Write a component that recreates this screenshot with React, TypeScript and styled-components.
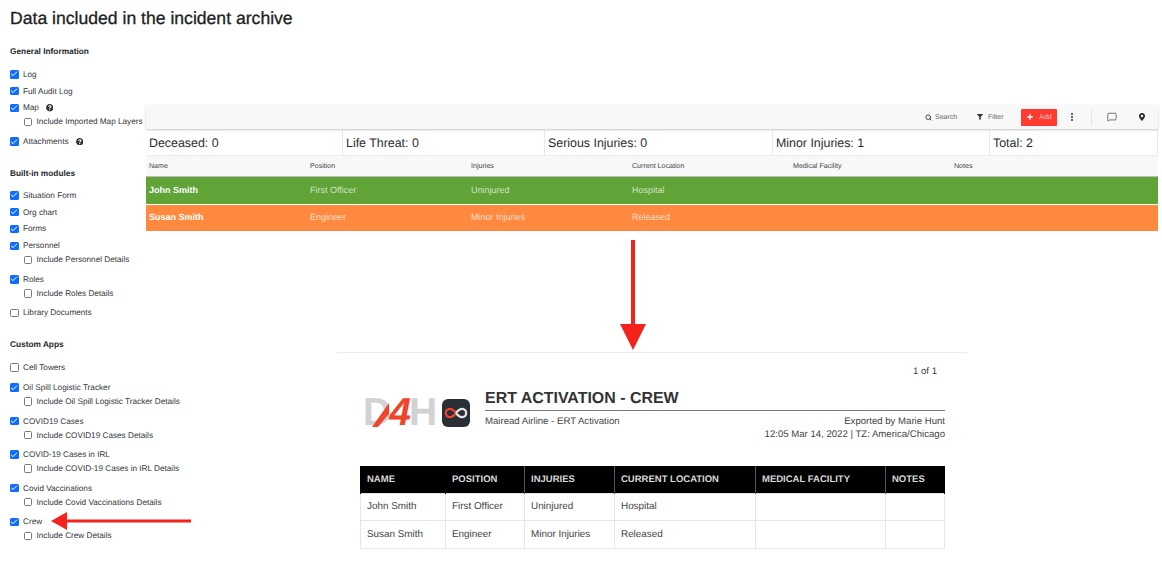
import React from "react";
import styled, { createGlobalStyle } from "styled-components";
import { Check, Search, Plus, MessageSquare } from "lucide-react";
import { FaFilter, FaMapMarkerAlt, FaQuestionCircle } from "react-icons/fa";

const GlobalStyle = createGlobalStyle`
  html, body {
    margin: 0;
    padding: 0;
    background: #fff;
    font-family: "Liberation Sans", Arial, sans-serif;
    text-rendering: geometricPrecision;
    overflow: hidden;
  }
`;

const Page = styled.div`
  position: relative;
  width: 1162px;
  height: 564px;
  overflow: hidden;
`;

const Title = styled.h1`
  margin: 0;
  padding: 8px 0 0 10px;
  height: 36px;
  box-sizing: border-box;
  font-size: 17.6px;
  line-height: 20px;
  font-weight: 400;
  color: #1c1e22;
  -webkit-text-stroke: 0.3px #1c1e22;
`;

const Body = styled.div`
  display: flex;
`;

// left column with the checkbox tree
const Sidebar = styled.aside`
  width: 146px;
  flex: none;
  padding-left: 10px;
  box-sizing: border-box;
  white-space: nowrap;
`;

const SectionTitle = styled.h3<{ $gap: number }>`
  margin: 0 0 ${(p) => p.$gap}px;
  padding-top: 9px;
  font-size: 8.3px;
  line-height: 12px;
  font-weight: 700;
  color: #24272b;
`;

const Section = styled.section`
  margin-bottom: 8px;
`;

const Field = styled.div`
  display: flex;
  align-items: center;
  height: 16.8px;
  font-size: 8.2px;
  color: #33373c;
`;

const SubField = styled(Field)`
  height: 11.2px;
  padding-left: 13.5px;
  margin-bottom: 5.6px;
`;

const TowerField = styled(Field)`
  margin-bottom: 3px;
`;

const Box = styled.span<{ $checked?: boolean }>`
  width: 8.5px;
  height: 8.5px;
  flex: none;
  margin-right: 4.5px;
  box-sizing: border-box;
  border-radius: 1.5px;
  display: flex;
  align-items: center;
  justify-content: center;
  background: ${(p) => (p.$checked ? "#0d6efd" : "#fff")};
  border: ${(p) => (p.$checked ? "none" : "0.8px solid #77797c")};
  color: #fff;
`;

const Hint = styled(FaQuestionCircle)`
  margin-left: 7px;
  width: 7.5px;
  height: 7.5px;
  color: #2a2d31;
`;

const Main = styled.main`
  flex: 1;
  min-width: 0;
  padding: 69px 4px 0 0;
`;

const Toolbar = styled.div`
  display: flex;
  align-items: center;
  justify-content: flex-end;
  height: 24px;
  background: #f8f8f8;
  box-shadow: 0 1px 2px rgba(0, 0, 0, 0.22);
  padding-right: 12px;
  position: relative;
  font-size: 7px;
  color: #666;
`;

const ToolItem = styled.div<{ $width: number }>`
  display: flex;
  align-items: center;
  gap: 3px;
  width: ${(p) => p.$width}px;
`;

const AddButton = styled.div`
  display: flex;
  align-items: center;
  justify-content: center;
  gap: 5px;
  width: 36px;
  height: 17px;
  margin-right: 14px;
  background: #ff3b30;
  border-radius: 1px;
  color: #ffc9c5;
`;

const Dots = styled.span`
  display: flex;
  flex-direction: column;
  gap: 1px;
  margin-right: 18px;

  i {
    width: 2px;
    height: 2px;
    background: #333;
    border-radius: 50%;
  }
`;

const ToolDivider = styled.span`
  width: 1px;
  height: 17px;
  background: #e6e6e6;
  margin-right: 15px;
`;

const ChatIcon = styled(MessageSquare)`
  margin-right: 21px;
`;

const Stats = styled.div`
  display: grid;
  grid-template-columns: 197px 202px 228px 217px 1fr;
  height: 26px;
  border-right: 1px solid #e8e8e8;
  box-sizing: border-box;
`;

const Stat = styled.div`
  display: flex;
  align-items: center;
  padding-left: 3px;
  box-sizing: border-box;
  font-size: 12.4px;
  color: #2b2e33;
  border-right: 1px solid #e8e8e8;
  margin-top: 1px;

  &:last-child {
    border-right: none;
  }
`;

const Row = styled.div<{ $bg: string; $height: number }>`
  display: grid;
  grid-template-columns: repeat(6, 161px) 1fr;
  align-items: center;
  height: ${(p) => p.$height}px;
  background: ${(p) => p.$bg};
`;

const HeadRow = styled(Row)`
  border-top: 1px solid #ececec;
  border-bottom: 1px solid #bdbdbd;
  box-sizing: border-box;
  font-size: 7.1px;
  color: #444;
`;

const DataRow = styled(Row)`
  box-sizing: border-box;
  padding-bottom: 2px;
  font-size: 9px;
  color: rgba(255, 255, 255, 0.72);
  margin-bottom: 1px;
`;

const Cell = styled.span`
  padding-left: 3px;
`;

const NameCell = styled(Cell)`
  font-weight: 700;
  color: #fff;
`;

const ArrowDown = styled.svg`
  display: block;
  margin: 9px 0 2px 473px;
`;

const Report = styled.div`
  width: 630px;
  margin: 0 0 0 191px;
  border-top: 1px solid #ececec;
  color: #444;
`;

const PageCount = styled.div`
  text-align: right;
  padding: 13px 30px 0 0;
  height: 22px;
  box-sizing: border-box;
  font-size: 9.6px;
  line-height: 12px;
`;

const ReportHead = styled.div`
  display: flex;
  padding: 13px 22px 0 26px;
  height: 91px;
  box-sizing: border-box;
`;

const Logo = styled.div`
  display: flex;
  align-items: center;
  width: 122px;
  height: 28px;
  margin-top: 11px;
  flex: none;
`;

const LogoWord = styled.span`
  position: relative;
  font-size: 39px;
  line-height: 28px;
  font-weight: 700;
  letter-spacing: -2px;
  color: #d2d2d2;
  width: 79px;
  white-space: nowrap;

  b {
    color: #f0452c;
    font-style: italic;
  }

  /* red slash cut into the D */
  &::before {
    content: "";
    position: absolute;
    left: 9px;
    top: 4px;
    width: 17px;
    height: 24px;
    background: #f0452c;
    clip-path: polygon(100% 0, 100% 45%, 35% 100%, 0 100%);
  }
`;

const LogoMark = styled.svg`
  flex: none;
`;

const ReportInfo = styled.div`
  flex: 1;
`;

const ReportTitle = styled.h2`
  margin: 0;
  height: 22px;
  font-size: 15.95px;
  line-height: 22px;
  font-weight: 700;
  color: #333;
  border-bottom: 1.5px solid #777;
`;

const MetaRow = styled.div`
  display: flex;
  justify-content: space-between;
  margin-top: 4px;
  font-size: 9.6px;
  line-height: 13px;
`;

const MetaRight = styled.div`
  text-align: right;
`;

const ReportTable = styled.table`
  border-collapse: collapse;
  table-layout: fixed;
  width: 584px;
  margin-left: 23px;
  font-size: 9.9px;
`;

const Th = styled.th<{ $w: number }>`
  width: ${(p) => p.$w}px;
  height: 27px;
  padding: 0 0 0 6px;
  box-sizing: border-box;
  background: #000;
  border: 1px solid #555;
  border-width: 0 1px;
  color: #d8d8d8;
  font-size: 9.5px;
  font-weight: 700;
  text-align: left;

  &:first-child, &:last-child {
    border-color: #000;
  }
`;

const Td = styled.td`
  height: 27.5px;
  padding: 0 0 0 6px;
  box-sizing: border-box;
  border: 1px solid #e6e6e6;
`;

const ArrowLeft = styled.svg`
  position: absolute;
  left: 51px;
  top: 512px;
`;

const Checked = ({ label, hint }: { label: string; hint?: boolean }) => (
  <Field>
    <Box $checked>
      <Check size={8} strokeWidth={3} />
    </Box>
    {label}
    {hint && <Hint />}
  </Field>
);

const Sub = ({ label }: { label: string }) => (
  <SubField>
    <Box />
    {label}
  </SubField>
);

const columns: [string, number][] = [
  ["NAME", 85],
  ["POSITION", 79],
  ["INJURIES", 90],
  ["CURRENT LOCATION", 141],
  ["MEDICAL FACILITY", 130],
  ["NOTES", 59],
];

const crew = [
  ["John Smith", "First Officer", "Uninjured", "Hospital"],
  ["Susan Smith", "Engineer", "Minor Injuries", "Released"],
];

export default function App() {
  return (
    <Page>
      <GlobalStyle />
      <Title>Data included in the incident archive</Title>
      <Body>
        <Sidebar>
          <Section>
            <SectionTitle $gap={9}>General Information</SectionTitle>
            <Checked label="Log" />
            <Checked label="Full Audit Log" />
            <Checked label="Map" hint />
            <Sub label="Include Imported Map Layers" />
            <Checked label="Attachments" hint />
          </Section>
          <Section>
            <SectionTitle $gap={8}>Built-in modules</SectionTitle>
            <Checked label="Situation Form" />
            <Checked label="Org chart" />
            <Checked label="Forms" />
            <Checked label="Personnel" />
            <Sub label="Include Personnel Details" />
            <Checked label="Roles" />
            <Sub label="Include Roles Details" />
            <Field>
              <Box />
              Library Documents
            </Field>
          </Section>
          <Section>
            <SectionTitle $gap={9}>Custom Apps</SectionTitle>
            <TowerField>
              <Box />
              Cell Towers
            </TowerField>
            <Checked label="Oil Spill Logistic Tracker" />
            <Sub label="Include Oil Spill Logistic Tracker Details" />
            <Checked label="COVID19 Cases" />
            <Sub label="Include COVID19 Cases Details" />
            <Checked label="COVID-19 Cases in IRL" />
            <Sub label="Include COVID-19 Cases in IRL Details" />
            <Checked label="Covid Vaccinations" />
            <Sub label="Include Covid Vaccinations Details" />
            <Checked label="Crew" />
            <Sub label="Include Crew Details" />
          </Section>
        </Sidebar>
        <Main>
          <Toolbar>
            <ToolItem $width={52}>
              <Search size={7} strokeWidth={3} color="#333" />
              Search
            </ToolItem>
            <ToolItem $width={44}>
              <FaFilter size={6} color="#333" />
              &nbsp;Filter
            </ToolItem>
            <AddButton>
              <Plus size={8} strokeWidth={4} color="#fff" />
              Add
            </AddButton>
            <Dots>
              <i />
              <i />
              <i />
            </Dots>
            <ToolDivider />
            <ChatIcon size={10} strokeWidth={1.6} color="#333" />
            <FaMapMarkerAlt size={8} color="#222" />
          </Toolbar>
          <Stats>
            <Stat>Deceased: 0</Stat>
            <Stat>Life Threat: 0</Stat>
            <Stat>Serious Injuries: 0</Stat>
            <Stat>Minor Injuries: 1</Stat>
            <Stat>Total: 2</Stat>
          </Stats>
          <HeadRow $bg="#f8f8f8" $height={22}>
            <Cell>Name</Cell>
            <Cell>Position</Cell>
            <Cell>Injuries</Cell>
            <Cell>Current Location</Cell>
            <Cell>Medical Facility</Cell>
            <Cell>Notes</Cell>
          </HeadRow>
          <DataRow $bg="#60a337" $height={27}>
            <NameCell>John Smith</NameCell>
            <Cell>First Officer</Cell>
            <Cell>Uninjured</Cell>
            <Cell>Hospital</Cell>
          </DataRow>
          <DataRow $bg="#ff8a3f" $height={26}>
            <NameCell>Susan Smith</NameCell>
            <Cell>Engineer</Cell>
            <Cell>Minor Injuries</Cell>
            <Cell>Released</Cell>
          </DataRow>
          <ArrowDown width="28" height="110" viewBox="0 0 28 110">
            <rect x="12" y="0" width="4" height="85" fill="#f5221b" />
            <path d="M1 84 H27 L14 110 Z" fill="#f5221b" />
          </ArrowDown>
          <Report>
            <PageCount>1 of 1</PageCount>
            <ReportHead>
              <Logo>
                <LogoWord>
                  D<b>4</b>H
                </LogoWord>
                <LogoMark width="28" height="28" viewBox="0 0 28 28">
                  <rect width="28" height="28" rx="6" fill="#2a2e35" />
                  <path
                    d="M14 14 C11 10 8.5 9.5 6.8 10 C4.6 10.6 3.8 12.4 3.8 14 C3.8 15.6 4.6 17.4 6.8 18 C8.5 18.5 11 18 14 14"
                    fill="none"
                    stroke="#f0452c"
                    strokeWidth="2.2"
                  />
                  <path
                    d="M14 14 C17 10 19.5 9.5 21.2 10 C23.4 10.6 24.2 12.4 24.2 14 C24.2 15.6 23.4 17.4 21.2 18 C19.5 18.5 17 18 14 14"
                    fill="none"
                    stroke="#e4e4e4"
                    strokeWidth="2.2"
                  />
                </LogoMark>
              </Logo>
              <ReportInfo>
                <ReportTitle>ERT ACTIVATION - CREW</ReportTitle>
                <MetaRow>
                  <div>Mairead Airline - ERT Activation</div>
                  <MetaRight>
                    Exported by Marie Hunt
                    <br />
                    12:05 Mar 14, 2022 | TZ: America/Chicago
                  </MetaRight>
                </MetaRow>
              </ReportInfo>
            </ReportHead>
            <ReportTable>
              <thead>
                <tr>
                  {columns.map(([label, w]) => (
                    <Th key={label} $w={w}>
                      {label}
                    </Th>
                  ))}
                </tr>
              </thead>
              <tbody>
                {crew.map((person) => (
                  <tr key={person[0]}>
                    {person.map((value) => (
                      <Td key={value}>{value}</Td>
                    ))}
                    <Td />
                    <Td />
                  </tr>
                ))}
              </tbody>
            </ReportTable>
          </Report>
        </Main>
      </Body>
      <ArrowLeft width="140" height="18" viewBox="0 0 140 18">
        <rect x="14" y="7.5" width="126" height="3" fill="#f5221b" />
        <path d="M0 9 L16 0 V18 Z" fill="#f5221b" />
      </ArrowLeft>
    </Page>
  );
}
